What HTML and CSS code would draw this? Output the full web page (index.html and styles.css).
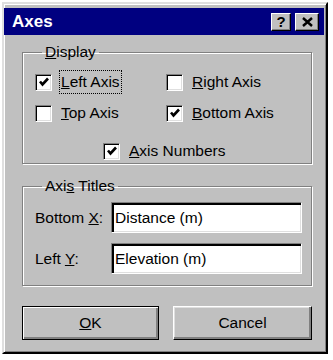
FILE: index.html
```html
<!DOCTYPE html>
<html lang="en">
<head>
    <meta charset="UTF-8">
    <title>Axes</title>
    <link rel="stylesheet" href="styles.css">
</head>
<body>
    <div class="dialog">
        <div class="title-bar">
            <span class="title">Axes</span>
            <div class="title-buttons">
                <button class="tb-btn help">?</button>
                <button class="tb-btn close">
                    <svg width="11" height="10" viewBox="0 0 11 10"><path d="M1 1 L10 9 M10 1 L1 9" stroke="#000" stroke-width="2.4" fill="none"/></svg>
                </button>
            </div>
        </div>

        <div class="dialog-body">
            <fieldset class="group display-group">
                <legend><u>D</u>isplay</legend>
                <div class="check-grid">
                    <label class="check-row">
                        <span class="checkbox checked"><svg width="12" height="12" viewBox="0 0 12 12"><path d="M2 5.5 L4.5 8.5 L10 2.5" stroke="#000" stroke-width="2.6" fill="none"/></svg></span>
                        <span class="focus"><u>L</u>eft Axis</span>
                    </label>
                    <label class="check-row">
                        <span class="checkbox"></span>
                        <span class="text"><u>R</u>ight Axis</span>
                    </label>
                    <label class="check-row">
                        <span class="checkbox"></span>
                        <span class="text"><u>T</u>op Axis</span>
                    </label>
                    <label class="check-row">
                        <span class="checkbox checked"><svg width="12" height="12" viewBox="0 0 12 12"><path d="M2 5.5 L4.5 8.5 L10 2.5" stroke="#000" stroke-width="2.6" fill="none"/></svg></span>
                        <span class="text"><u>B</u>ottom Axis</span>
                    </label>
                    <label class="check-row numbers">
                        <span class="checkbox checked"><svg width="12" height="12" viewBox="0 0 12 12"><path d="M2 5.5 L4.5 8.5 L10 2.5" stroke="#000" stroke-width="2.6" fill="none"/></svg></span>
                        <span class="text"><u>A</u>xis Numbers</span>
                    </label>
                </div>
            </fieldset>

            <fieldset class="group titles-group">
                <legend>Axi<u>s</u> Titles</legend>
                <div class="field-row">
                    <span class="field-label">Bottom <u>X</u>:</span>
                    <input class="text-box" type="text" value="Distance (m)">
                </div>
                <div class="field-row">
                    <span class="field-label">Left <u>Y</u>:</span>
                    <input class="text-box" type="text" value="Elevation (m)">
                </div>
            </fieldset>

            <div class="buttons">
                <button class="btn default"><u>O</u>K</button>
                <button class="btn">Cancel</button>
            </div>
        </div>
    </div>
</body>
</html>
```

FILE: styles.css
```css
* {
    box-sizing: border-box;
}
body {
    margin: 0;
    background: #fff;
    font-family: "Liberation Sans", Arial, sans-serif;
    font-size: 15.5px;
    color: #000;
}
.dialog {
    margin: 2px 0 0 2px;
    width: 326px;
    height: 352px;
    background: #c0c0c0;
    padding: 4px 2px 2px 0;
    border: 2px solid;
    border-color: #dfdfdf #000 #000 #dfdfdf;
    box-shadow: inset 1px 1px #fff, inset -1px -1px #808080;
}
.title-bar {
    height: 27px;
    background: #000080;
    display: flex;
    align-items: center;
    justify-content: space-between;
    padding: 0 5px 0 8px;
}
.title {
    color: #fff;
    font-weight: bold;
    font-size: 17px;
}
.title-buttons {
    display: flex;
    gap: 4px;
}
.tb-btn {
    width: 20px;
    height: 18px;
    padding: 0;
    background: #c0c0c0;
    border: 1px solid;
    border-color: #fff #000 #000 #fff;
    box-shadow: inset -1px -1px #808080;
    font-family: "Liberation Sans", Arial, sans-serif;
    font-weight: bold;
    font-size: 15px;
    line-height: 15px;
    display: flex;
    align-items: center;
    justify-content: center;
}
.tb-btn.close {
    width: 24px;
}
.dialog-body {
    padding: 8px 12px 0 18px;
}
.group {
    margin: 0;
    border: 1px solid #808080;
    box-shadow: inset 1px 1px #fff, 1px 1px #fff;
}
.group legend {
    padding: 0 3px;
    margin-left: 7px;
    line-height: 18px;
}
.display-group {
    padding: 9px 12px 1px;
}
.check-grid {
    display: grid;
    grid-template-columns: 131px 1fr;
    row-gap: 7px;
}
.check-row {
    display: flex;
    align-items: center;
    height: 24px;
}
.check-row.numbers {
    grid-column: 1 / 3;
    margin-top: 8px;
    margin-left: 68px;
    height: 22px;
}
.checkbox {
    width: 17px;
    height: 17px;
    flex: none;
    background: #fff;
    border: 1px solid;
    border-color: #808080 #fff #fff #808080;
    box-shadow: inset 1px 1px #000, inset -1px -1px #dfdfdf;
    display: flex;
    align-items: center;
    justify-content: center;
}
.text {
    margin-left: 9px;
}
.focus {
    margin-left: 8px;
    padding: 2px 1px;
    outline: 1px dotted #000;
}
.titles-group {
    margin-top: 13px;
    padding: 7px 8px 11px 12px;
}
.field-row {
    display: flex;
    align-items: center;
}
.field-row + .field-row {
    margin-top: 10px;
}
.field-label {
    width: 76px;
}
.text-box {
    width: 191px;
    height: 31px;
    padding: 0 0 0 3px;
    font-family: "Liberation Sans", Arial, sans-serif;
    font-size: 15.5px;
    background: #fff;
    border: 1px solid;
    border-color: #808080 #fff #fff #808080;
    box-shadow: inset 2px 2px #000, inset -1px -1px #dfdfdf;
    outline: none;
}
.buttons {
    display: grid;
    grid-template-columns: 137px 139px;
    column-gap: 14px;
    margin-top: 20px;
}
.btn {
    height: 34px;
    background: #c0c0c0;
    font-family: "Liberation Sans", Arial, sans-serif;
    font-size: 15.5px;
    color: #000;
    border: 1px solid;
    border-color: #fff #000 #000 #fff;
    box-shadow: inset -2px -2px #808080, inset 1px 1px #dfdfdf;
    padding: 0;
}
.btn.default {
    border: 1px solid #000;
    box-shadow: inset 1px 1px #fff, inset -2px -2px #808080, inset -1px -1px #000;
}
```
